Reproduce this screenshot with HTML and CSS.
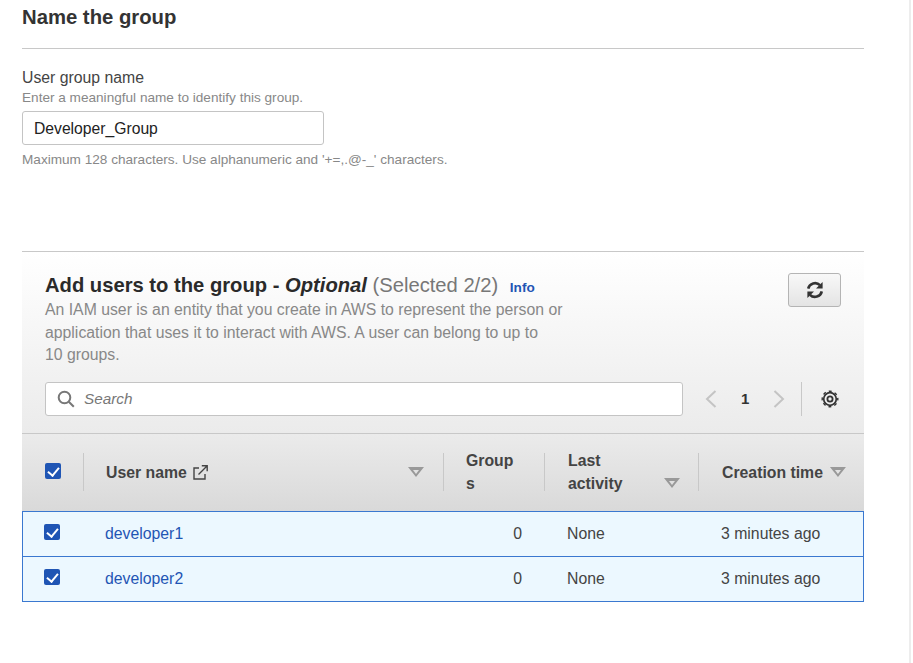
FILE: index.html
```html
<!DOCTYPE html>
<html lang="en">
<head>
    <meta charset="UTF-8">
    <meta name="viewport" content="width=device-width, initial-scale=1.0">
    <title>Create user group</title>
    <link rel="stylesheet" href="styles.css">
</head>
<body>
    <div class="page">
        <main class="content">
            <section class="name-section">
                <h2 class="section-title">Name the group</h2>
                <label class="field-label" for="groupName">User group name</label>
                <p class="field-hint">Enter a meaningful name to identify this group.</p>
                <input class="text-input" type="text" id="groupName" value="Developer_Group">
                <p class="field-note">Maximum 128 characters. Use alphanumeric and '+=,.@-_' characters.</p>
            </section>

            <section class="users-section">
                <div class="users-head">
                    <div class="users-top">
                        <div class="users-intro">
                            <h2 class="users-title">Add users to the group - <em>Optional</em> <span class="users-count">(Selected 2/2)</span> <a class="info-link" href="#">Info</a></h2>
                            <p class="users-desc">An IAM user is an entity that you create in AWS to represent the person or application that uses it to interact with AWS. A user can belong to up to 10&nbsp;groups.</p>
                        </div>
                        <button class="refresh-btn" type="button" aria-label="Refresh">
                            <svg width="18" height="18" viewBox="0 0 18 18" fill="none" stroke="#333" stroke-width="2.6">
                                <path d="M2.2 7.6A7 7 0 0 1 14 4.2"/>
                                <path d="M15.8 10.4A7 7 0 0 1 4 13.8"/>
                                <path d="M16.6 1v6.6h-6.6z" fill="#333" stroke="none"/>
                                <path d="M1.4 17v-6.6h6.6z" fill="#333" stroke="none"/>
                            </svg>
                        </button>
                    </div>
                    <div class="users-tools">
                        <div class="search-box">
                            <svg width="18" height="18" viewBox="0 0 18 18" fill="none" stroke="#777" stroke-width="2">
                                <circle cx="7.5" cy="7.5" r="5.8"/>
                                <path d="M11.8 11.8l5 5"/>
                            </svg>
                            <span class="search-text">Search</span>
                        </div>
                        <div class="pager">
                            <svg width="12" height="18" viewBox="0 0 12 18" fill="none" stroke="#c4c4c4" stroke-width="2"><path d="M10.5 1L2 9l8.5 8"/></svg>
                            <span class="pager-num">1</span>
                            <svg width="12" height="18" viewBox="0 0 12 18" fill="none" stroke="#c4c4c4" stroke-width="2"><path d="M1.5 1L10 9l-8.5 8"/></svg>
                        </div>
                        <div class="settings">
                            <svg width="18" height="18" viewBox="0 0 18 18" fill="none" stroke="#333">
                                <circle cx="9" cy="9" r="2.6" stroke-width="1.8"/>
                                <circle cx="9" cy="9" r="6.3" stroke-width="1.7"/>
                                <circle cx="9" cy="9" r="7.8" stroke-width="1.4" stroke-dasharray="3 3.13" stroke-dashoffset="1.5"/>
                            </svg>
                        </div>
                    </div>
                </div>

                <div class="table">
                    <div class="table-head">
                        <div class="th th-check"><span class="checkbox"></span></div>
                        <div class="th th-user">
                            <span class="th-label">User name</span>
                            <svg class="external" width="15" height="15" viewBox="0 0 15 15" fill="none" stroke="#444" stroke-width="1.4">
                                <path d="M6 3H1v11h11V9"/>
                                <path d="M5.5 9.5L14 1M8.8 .8h5.4v5.4"/>
                            </svg>
                            <span class="sort-arrow sort-end"></span>
                        </div>
                        <div class="th th-groups"><span class="th-label">Group<br>s</span></div>
                        <div class="th th-activity">
                            <span class="th-label">Last<br>activity</span>
                            <span class="sort-arrow sort-low"></span>
                        </div>
                        <div class="th th-created">
                            <span class="th-label">Creation time</span>
                            <span class="sort-arrow"></span>
                        </div>
                    </div>

                    <div class="table-row">
                        <div class="td td-check"><span class="checkbox"></span></div>
                        <div class="td td-user"><a href="#">developer1</a></div>
                        <div class="td td-groups">0</div>
                        <div class="td td-activity">None</div>
                        <div class="td td-created">3 minutes ago</div>
                    </div>
                    <div class="table-row">
                        <div class="td td-check"><span class="checkbox"></span></div>
                        <div class="td td-user"><a href="#">developer2</a></div>
                        <div class="td td-groups">0</div>
                        <div class="td td-activity">None</div>
                        <div class="td td-created">3 minutes ago</div>
                    </div>
                </div>
            </section>
        </main>
        <div class="side-strip"></div>
    </div>
</body>
</html>
```
FILE: styles.css
```css
* {
    box-sizing: border-box;
}

html, body {
    height: 100%;
}

body {
    margin: 0;
    background: #fff;
    color: #333;
    font-family: 'Liberation Sans', Arial, sans-serif;
    font-size: 15.8px;
    overflow: hidden;
}

.page {
    display: flex;
    height: 100%;
}

.content {
    width: 842px;
    margin-left: 22px;
}

.side-strip {
    width: 4px;
    margin-left: auto;
    background: #fff;
    border-left: 2px solid #ededed;
}

/* name section */
.name-section {
    height: 252px;
    border-bottom: 1px solid #c8c8c8;
    padding-top: 6px;
}

.section-title {
    margin: 0 0 20px;
    height: 43px;
    line-height: 22px;
    font-size: 20.3px;
    font-weight: bold;
    color: #333;
    border-bottom: 1px solid #c8c8c8;
}

.field-label {
    display: block;
    line-height: 18px;
    color: #444;
}

.field-hint {
    margin: 3px 0 5px;
    font-size: 13.6px;
    line-height: 16px;
    color: #888;
}

.text-input {
    display: block;
    width: 302px;
    height: 34px;
    padding: 1px 11px 0;
    border: 1px solid #c4c4c4;
    border-radius: 3px;
    font-family: inherit;
    font-size: 15.7px;
    color: #222;
    background: #fff;
}

.field-note {
    margin: 7px 0 0;
    font-size: 13.6px;
    line-height: 16px;
    color: #888;
}

/* users panel */
.users-head {
    height: 182px;
    padding: 21px 23px 0;
    background: linear-gradient(#fff, #ebebeb);
    border-bottom: 1px solid #c8c8c8;
}

.users-top {
    display: flex;
    justify-content: space-between;
    align-items: flex-start;
}

.users-intro {
    width: 525px;
}

.users-title {
    margin: 0;
    font-size: 20.2px;
    line-height: 24px;
    font-weight: bold;
    color: #2a2a2a;
    white-space: nowrap;
}

.users-count {
    font-weight: normal;
    color: #777;
}

.info-link {
    margin-left: 6px;
    font-size: 13.6px;
    color: #1f55b4;
    text-decoration: none;
}

.users-desc {
    margin: -1px 0 0;
    line-height: 22.5px;
    color: #888;
}

.refresh-btn {
    display: flex;
    align-items: center;
    justify-content: center;
    width: 53px;
    height: 34px;
    padding: 0;
    border: 1px solid #b4b4b4;
    border-radius: 3px;
    background: linear-gradient(#f8f8f8, #e4e4e4);
}

.users-tools {
    display: flex;
    align-items: center;
    margin-top: 15px;
}

.search-box {
    display: flex;
    align-items: center;
    gap: 9px;
    width: 638px;
    height: 34px;
    padding: 0 11px;
    background: #fff;
    border: 1px solid #c4c4c4;
    border-radius: 3px;
}

.search-text {
    font-style: italic;
    font-size: 15.3px;
    color: #777;
}

.pager {
    display: flex;
    align-items: center;
    width: 118px;
    padding-left: 22px;
    gap: 24px;
}

.pager-num {
    font-weight: bold;
    font-size: 15px;
    color: #333;
}

.settings {
    display: flex;
    align-items: center;
    height: 34px;
    padding-left: 19px;
    border-left: 1px solid #c8c8c8;
}

/* table */
.table-head,
.table-row {
    display: grid;
    grid-template-columns: 62px 360px 101px 154px 165px;
}

.table-head {
    height: 78px;
    padding-top: 19px;
    background: linear-gradient(#ebebeb, #d9d9d9);
    border-bottom: 1px solid #c9c9c9;
}

.th {
    display: flex;
    align-items: center;
    height: 38px;
    font-weight: bold;
    line-height: 23px;
    color: #444;
    border-right: 1px solid #c8c8c8;
}

.th-created {
    border-right: none;
    padding-left: 23px;
    gap: 7px;
}

.th-check {
    padding-left: 23px;
}

.th-check .checkbox {
    margin-top: -2px;
}

.th-user {
    padding-left: 22px;
}

.th-user .external {
    margin-left: 6px;
}

.th-groups {
    padding-left: 22px;
}

.th-activity {
    padding-left: 23px;
}

.sort-arrow {
    width: 16px;
    height: 10px;
    flex: none;
    background: #999;
    clip-path: polygon(0 0, 100% 0, 50% 100%, 0 0, 5px 3px, 50% calc(100% - 3px), calc(100% - 5px) 3px, 5px 3px);
}

.sort-end {
    margin-left: auto;
    margin-right: 19px;
}

.sort-low {
    margin-left: auto;
    margin-right: 18px;
    margin-top: 22px;
}

.table-row {
    height: 46px;
    margin-top: -1px;
    align-items: center;
    background: #ecf8ff;
    border: 1px solid #3a78d0;
}

.td {
    color: #444;
}

.td-check {
    display: flex;
    padding-left: 21px;
    margin-top: -5px;
}

.td-user {
    padding-left: 20px;
}

.td-user a {
    color: #1f55b4;
    text-decoration: none;
}

.td-groups {
    text-align: right;
    padding-right: 24px;
}

.td-activity {
    padding-left: 21px;
}

.td-created {
    padding-left: 21px;
}

.checkbox {
    position: relative;
    display: block;
    width: 16px;
    height: 16px;
    background: #1f55b4;
    border-radius: 2px;
}

.checkbox::after {
    content: "";
    position: absolute;
    left: 5px;
    top: 2px;
    width: 5px;
    height: 9px;
    border: solid #fff;
    border-width: 0 2px 2px 0;
    transform: rotate(40deg);
}
```
